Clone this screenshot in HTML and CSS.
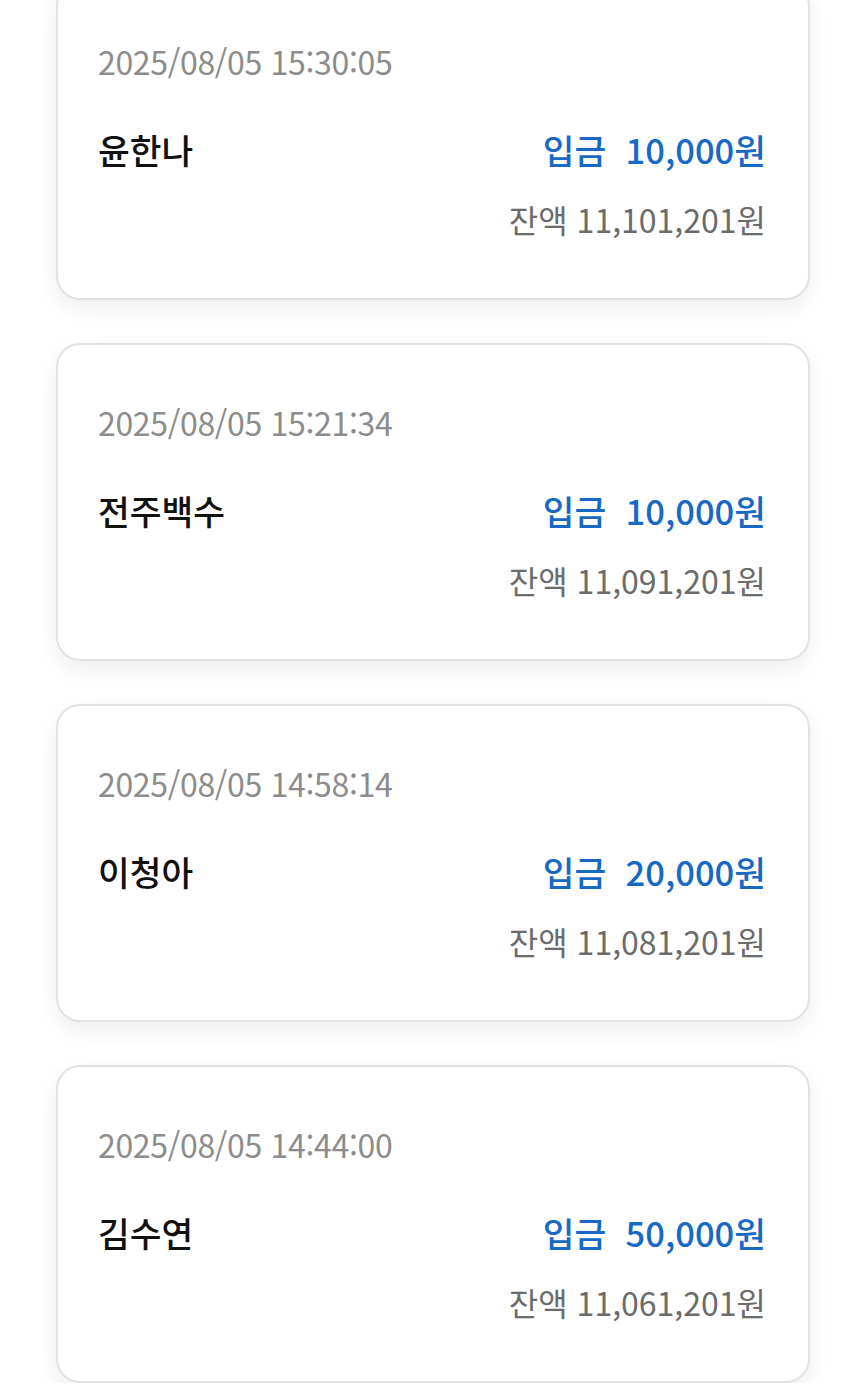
FILE: index.html
```html
<!DOCTYPE html>
<html lang="ko">
<head>
<meta charset="utf-8">
<link rel="stylesheet" href="styles.css">
</head>
<body>
<main class="list">
  <section class="card">
    <div class="date">2025/08/05 15:30:05</div>
    <div class="row">
      <span class="name">윤한나</span>
      <span class="amount">입금&nbsp;&nbsp;10,000원</span>
    </div>
    <div class="balance">잔액 11,101,201원</div>
  </section>
  <section class="card">
    <div class="date">2025/08/05 15:21:34</div>
    <div class="row">
      <span class="name">전주백수</span>
      <span class="amount">입금&nbsp;&nbsp;10,000원</span>
    </div>
    <div class="balance">잔액 11,091,201원</div>
  </section>
  <section class="card">
    <div class="date">2025/08/05 14:58:14</div>
    <div class="row">
      <span class="name">이청아</span>
      <span class="amount">입금&nbsp;&nbsp;20,000원</span>
    </div>
    <div class="balance">잔액 11,081,201원</div>
  </section>
  <section class="card">
    <div class="date">2025/08/05 14:44:00</div>
    <div class="row">
      <span class="name">김수연</span>
      <span class="amount">입금&nbsp;&nbsp;50,000원</span>
    </div>
    <div class="balance">잔액 11,061,201원</div>
  </section>
</main>
</body>
</html>
```
FILE: styles.css
```css
html, body {
  margin: 0;
  padding: 0;
  background: #ffffff;
}
body {
  font-family: "Noto Sans CJK KR", "Noto Sans", sans-serif;
  overflow: hidden;
}
.list {
  display: flex;
  flex-direction: column;
  gap: 43px;
  padding: 0 54px 0 56px;
  margin-top: -18px;
}
.card {
  box-sizing: border-box;
  height: 318px;
  background: #fff;
  border: 2px solid #e2e2e2;
  border-radius: 24px;
  box-shadow: 0 8px 22px rgba(0, 0, 0, 0.07);
  padding: 53px 42px 0 40px;
}
.date {
  font-size: 32px;
  line-height: 48px;
  color: #8c8c8c;
  letter-spacing: -0.33px;
}
.row {
  margin-top: 40px;
  display: flex;
  justify-content: space-between;
  align-items: center;
  height: 48px;
}
.name {
  font-size: 34.5px;
  font-weight: 500;
  color: #111;
}
.amount {
  font-size: 34.5px;
  font-weight: 500;
  color: #1769c4;
}
.balance {
  margin-top: 22px;
  text-align: right;
  font-size: 32px;
  line-height: 48px;
  color: #6b6b6b;
}
```
